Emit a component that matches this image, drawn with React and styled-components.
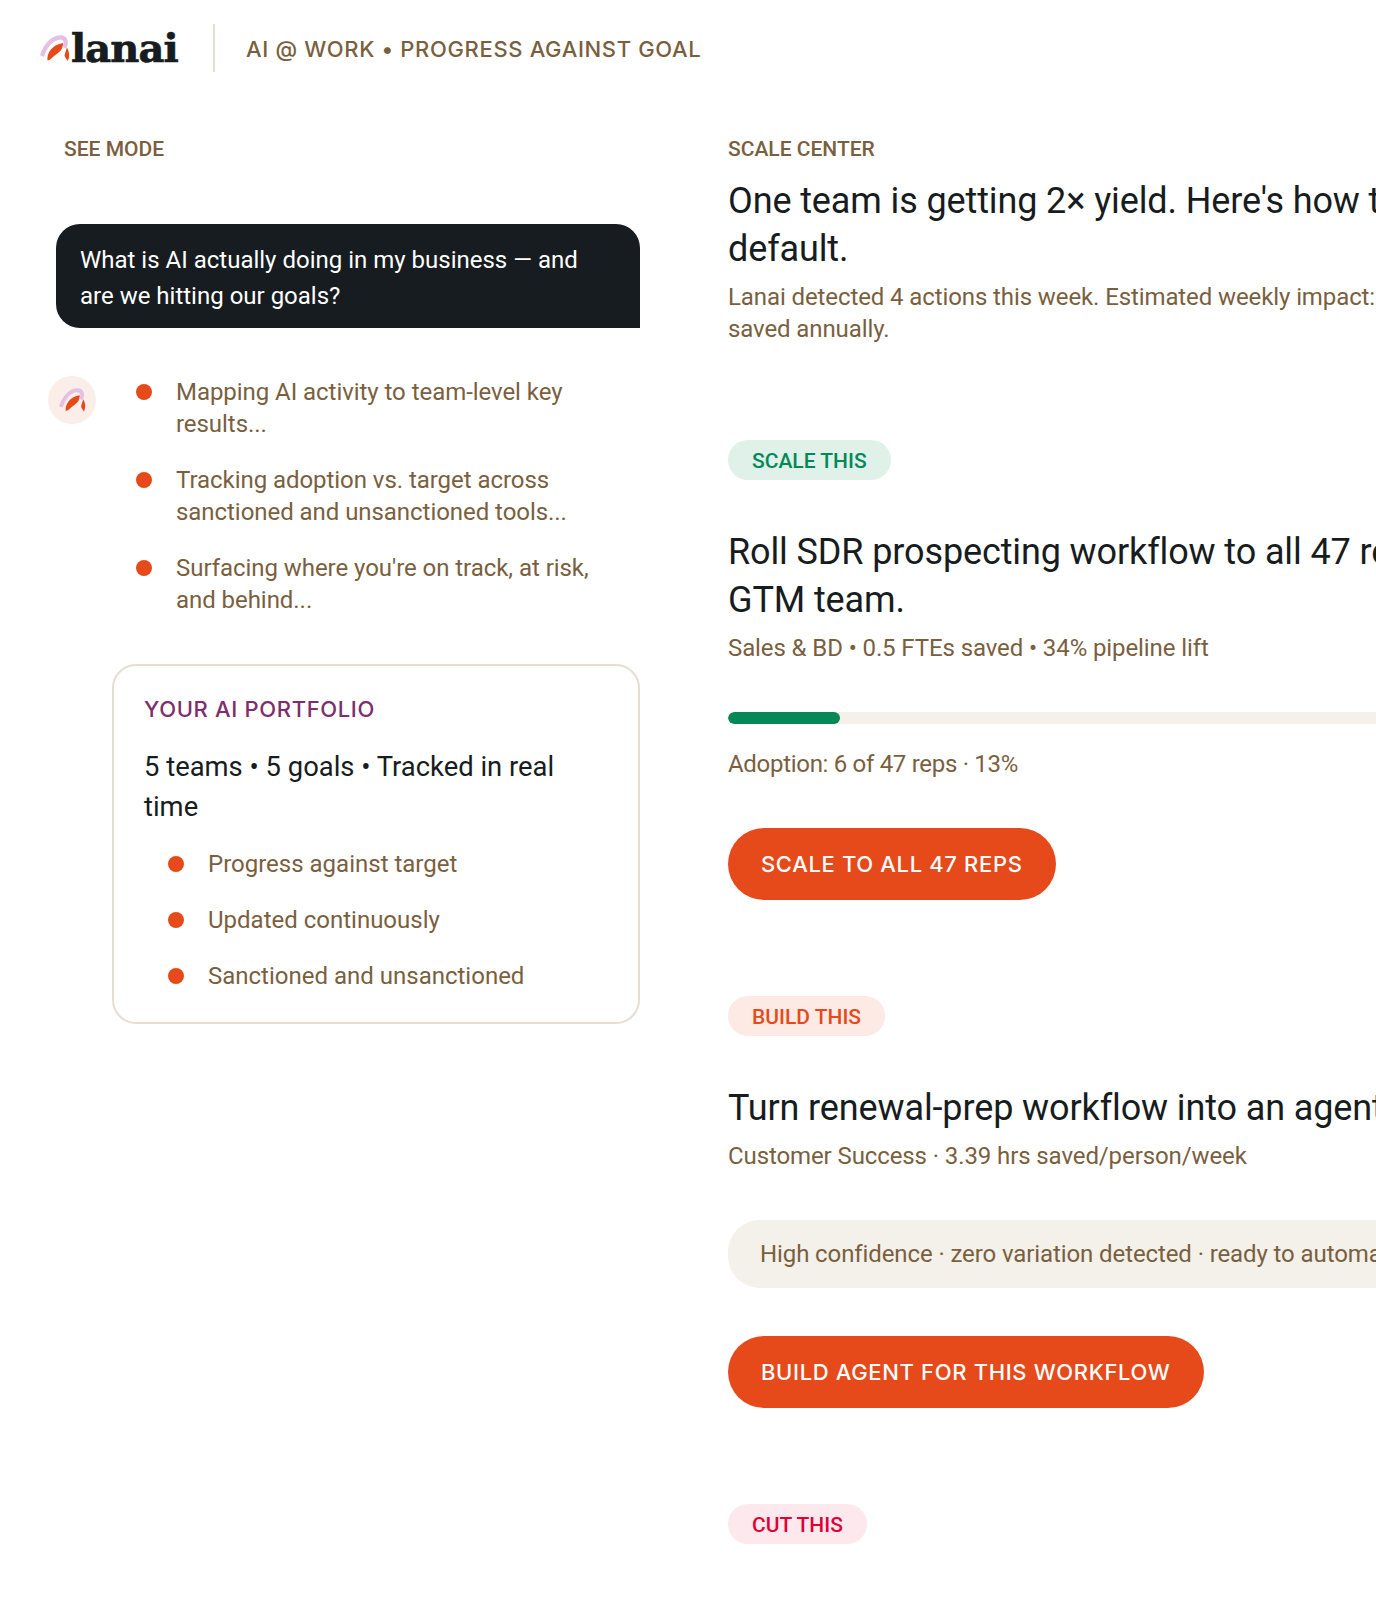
import React from 'react';
import styled, { createGlobalStyle } from 'styled-components';

const Global = createGlobalStyle`
  html, body { margin: 0; padding: 0; background: #fff; }
  body { font-family: "Roboto", "Liberation Sans", sans-serif; }
  * { box-sizing: border-box; }
`;
const Page = styled.div`width: 1376px; height: 1600px; overflow: hidden; background: #fff;`;
const Header = styled.header`height: 97px; padding: 24px 40px 0; display: flex; align-items: flex-start;`;
const Brand = styled.div`display: flex; align-items: center; height: 48px; width: 175px; border-right: 2px solid #e5dfd3;`;
const Wordmark = styled.span`font-family: "DejaVu Serif", serif; font-weight: 700; font-size: 40px; letter-spacing: -0.9px; -webkit-text-stroke: 0.7px #171c20; color: #171c20; line-height: 48px; margin-left: 1px;`;
const HeaderTitle = styled.div`margin-left: 31px; height: 48px; line-height: 50px; font-family: "Inter", sans-serif; font-size: 22px; font-weight: 500; letter-spacing: 0.65px; color: #7a5f3f; white-space: nowrap;`;
const Columns = styled.div`display: flex; padding-top: 39px;`;
const Left = styled.div`width: 728px; flex: none; padding: 0 88px 0 48px;`;
const Right = styled.div`width: 861px; flex: none;`;
const Eyebrow = styled.div`font-size: 21px; font-weight: 500; line-height: 26px; color: #7a5f3f; margin-left: ${p => p.$inset || 0}px;`;
const Bubble = styled.div`margin: 62px 0 0 8px; height: 104px; background: #171c20; color: #fff; border-radius: 24px 24px 0 24px; padding: 18px 40px 13px 24px; font-size: 24px; line-height: 36px;`;
const Thinking = styled.div`display: flex; margin-top: 48px;`;
const Avatar = styled.div`width: 48px; height: 48px; border-radius: 50%; background: #fbeee8; display: flex; align-items: center; justify-content: center; flex: none;`;
const Steps = styled.ul`list-style: none; margin: 0; padding: 0 24px 0 40px; flex: 1;`;
const Step = styled.li`display: flex; gap: 24px; font-size: 24px; line-height: 32px; letter-spacing: -0.05px; color: #7a5f3f; margin-bottom: 24px;`;
const Dot = styled.span`width: 16px; height: 16px; border-radius: 50%; background: #e64a1b; flex: none; margin-top: 8px;`;
const Card = styled.section`margin: 24px 0 0 64px; height: 360px; border: 2px solid #e5dfd3; border-radius: 24px; padding: 30px;`;
const CardTitle = styled.div`font-family: "Inter", sans-serif; font-size: 22px; font-weight: 500; letter-spacing: 0.65px; color: #7d2e6b; line-height: 26px;`;
const CardBody = styled.div`margin-top: 25px; font-size: 27.4px; line-height: 40px; color: #171c20;`;
const CardList = styled.ul`list-style: none; margin: 9px 0 0; padding: 0 0 0 24px;`;
const CardItem = styled.li`display: flex; align-items: center; gap: 24px; height: 56px; font-size: 24px; color: #7a5f3f;`;
const CardDot = styled.span`width: 16px; height: 16px; border-radius: 50%; background: #e64a1b; flex: none;`;
const Heading = styled.h2`margin: ${p => p.$top || 0}px 0 0; font-size: 36px; font-weight: 400; line-height: 48px; letter-spacing: -0.12px; color: #171c20; white-space: nowrap;`;
const Sub = styled.p`margin: ${p => p.$top || 8}px 0 0; font-size: 24px; line-height: 32px; letter-spacing: ${p => (p.$tight ? '-0.3px' : '-0.1px')}; color: #7a5f3f;`;
const Block = styled.div`margin-top: ${p => p.$top}px;`;
const Tag = styled.span`display: inline-block; height: 40px; line-height: 42px; padding: 0 24px; border-radius: 20px; font-size: 21px; font-weight: 500; color: ${p => p.$fg}; background: ${p => p.$bg};`;
const Track = styled.div`height: 12px; margin-top: 48px; background: #f5f1ea; border-radius: 6px; overflow: hidden;`;
const Fill = styled.div`height: 100%; background: #038857; border-radius: 6px;`;
const Button = styled.button`display: block; height: 72px; margin-top: ${p => p.$top}px; padding: 0 33px; border: 0; border-radius: 36px; background: #e64a1b; color: #fff; font-family: "Inter", sans-serif; font-size: 22px; font-weight: 500; letter-spacing: 0.65px; white-space: nowrap;`;
const Note = styled.div`height: 68px; margin-top: 48px; padding: 0 32px; line-height: 68px; background: #f4f1ea; border-radius: 32px; font-size: 24px; letter-spacing: -0.1px; color: #7a5f3f; white-space: nowrap;`;

const Mark = ({ size = 30 }) => (
  <svg width={size} height={size * 26 / 30} viewBox="0 0 30 26" fill="none">
    <path d="M7.500 25.500C6.500 18 12.500 9.500 23 8C24 13.500 19 17.500 15.500 20C12.500 22 11 24.800 7.500 25.500Z" fill="#e64a1b" />
    <path d="M27 12.500C29.500 17 30 21.500 27.800 26C26.300 24 25 22.500 24.500 20.500C25.200 18 26 15 27 12.500Z" fill="#e64a1b" />
    <path d="M2 21C5.500 10 12.500 3 19.500 2.500C26.500 2 26.800 8.500 24 12.500" stroke="#e4bfe6" strokeWidth="4.300" />
  </svg>
);

const steps = [
  'Mapping AI activity to team-level key results...',
  'Tracking adoption vs. target across sanctioned and unsanctioned tools...',
  "Surfacing where you're on track, at risk, and behind...",
];
const cardItems = ['Progress against target', 'Updated continuously', 'Sanctioned and unsanctioned'];

export default function App() {
  return (
    <Page>
      <Global />
      <Header>
        <Brand><Mark /><Wordmark>lanai</Wordmark></Brand>
        <HeaderTitle>AI @ WORK • PROGRESS AGAINST GOAL</HeaderTitle>
      </Header>
      <Columns>
        <Left>
          <Eyebrow $inset={16}>SEE MODE</Eyebrow>
          <Bubble>What is AI actually doing in my business — and are we hitting our goals?</Bubble>
          <Thinking>
            <Avatar><Mark size={27} /></Avatar>
            <Steps>
              {steps.map(t => <Step key={t}><Dot /><span>{t}</span></Step>)}
            </Steps>
          </Thinking>
          <Card>
            <CardTitle>YOUR AI PORTFOLIO</CardTitle>
            <CardBody>5 teams • 5 goals • Tracked in real time</CardBody>
            <CardList>
              {cardItems.map(t => <CardItem key={t}><CardDot />{t}</CardItem>)}
            </CardList>
          </Card>
        </Left>
        <Right>
          <Eyebrow>SCALE CENTER</Eyebrow>
          <Heading $top={15}>One team is getting 2× yield. Here's how to make it the<br />default.</Heading>
          <Sub>Lanai detected 4 actions this week. Estimated weekly impact: 41 hours, 2 FTEs saved annually.</Sub>
          <Block $top={95}>
            <Tag $fg="#038857" $bg="#e0f1ea">SCALE THIS</Tag>
            <Heading $top={48}>Roll SDR prospecting workflow to all 47 reps across the<br />GTM team.</Heading>
            <Sub>Sales &amp; BD • 0.5 FTEs saved • 34% pipeline lift</Sub>
            <Track><Fill style={{ width: `${(6 / 47) * 100 + 0.2}%` }} /></Track>
            <Sub $top={24} $tight>Adoption: 6 of 47 reps · 13%</Sub>
            <Button $top={48}>SCALE TO ALL 47 REPS</Button>
          </Block>
          <Block $top={96}>
            <Tag $fg="#e64a1b" $bg="#fdeae4">BUILD THIS</Tag>
            <Heading $top={48}>Turn renewal-prep workflow into an agent.</Heading>
            <Sub>Customer Success · 3.39 hrs saved/person/week</Sub>
            <Note>High confidence · zero variation detected · ready to automate</Note>
            <Button $top={48}>BUILD AGENT FOR THIS WORKFLOW</Button>
          </Block>
          <Block $top={96}>
            <Tag $fg="#e00034" $bg="#fde8ee">CUT THIS</Tag>
          </Block>
        </Right>
      </Columns>
    </Page>
  );
}
